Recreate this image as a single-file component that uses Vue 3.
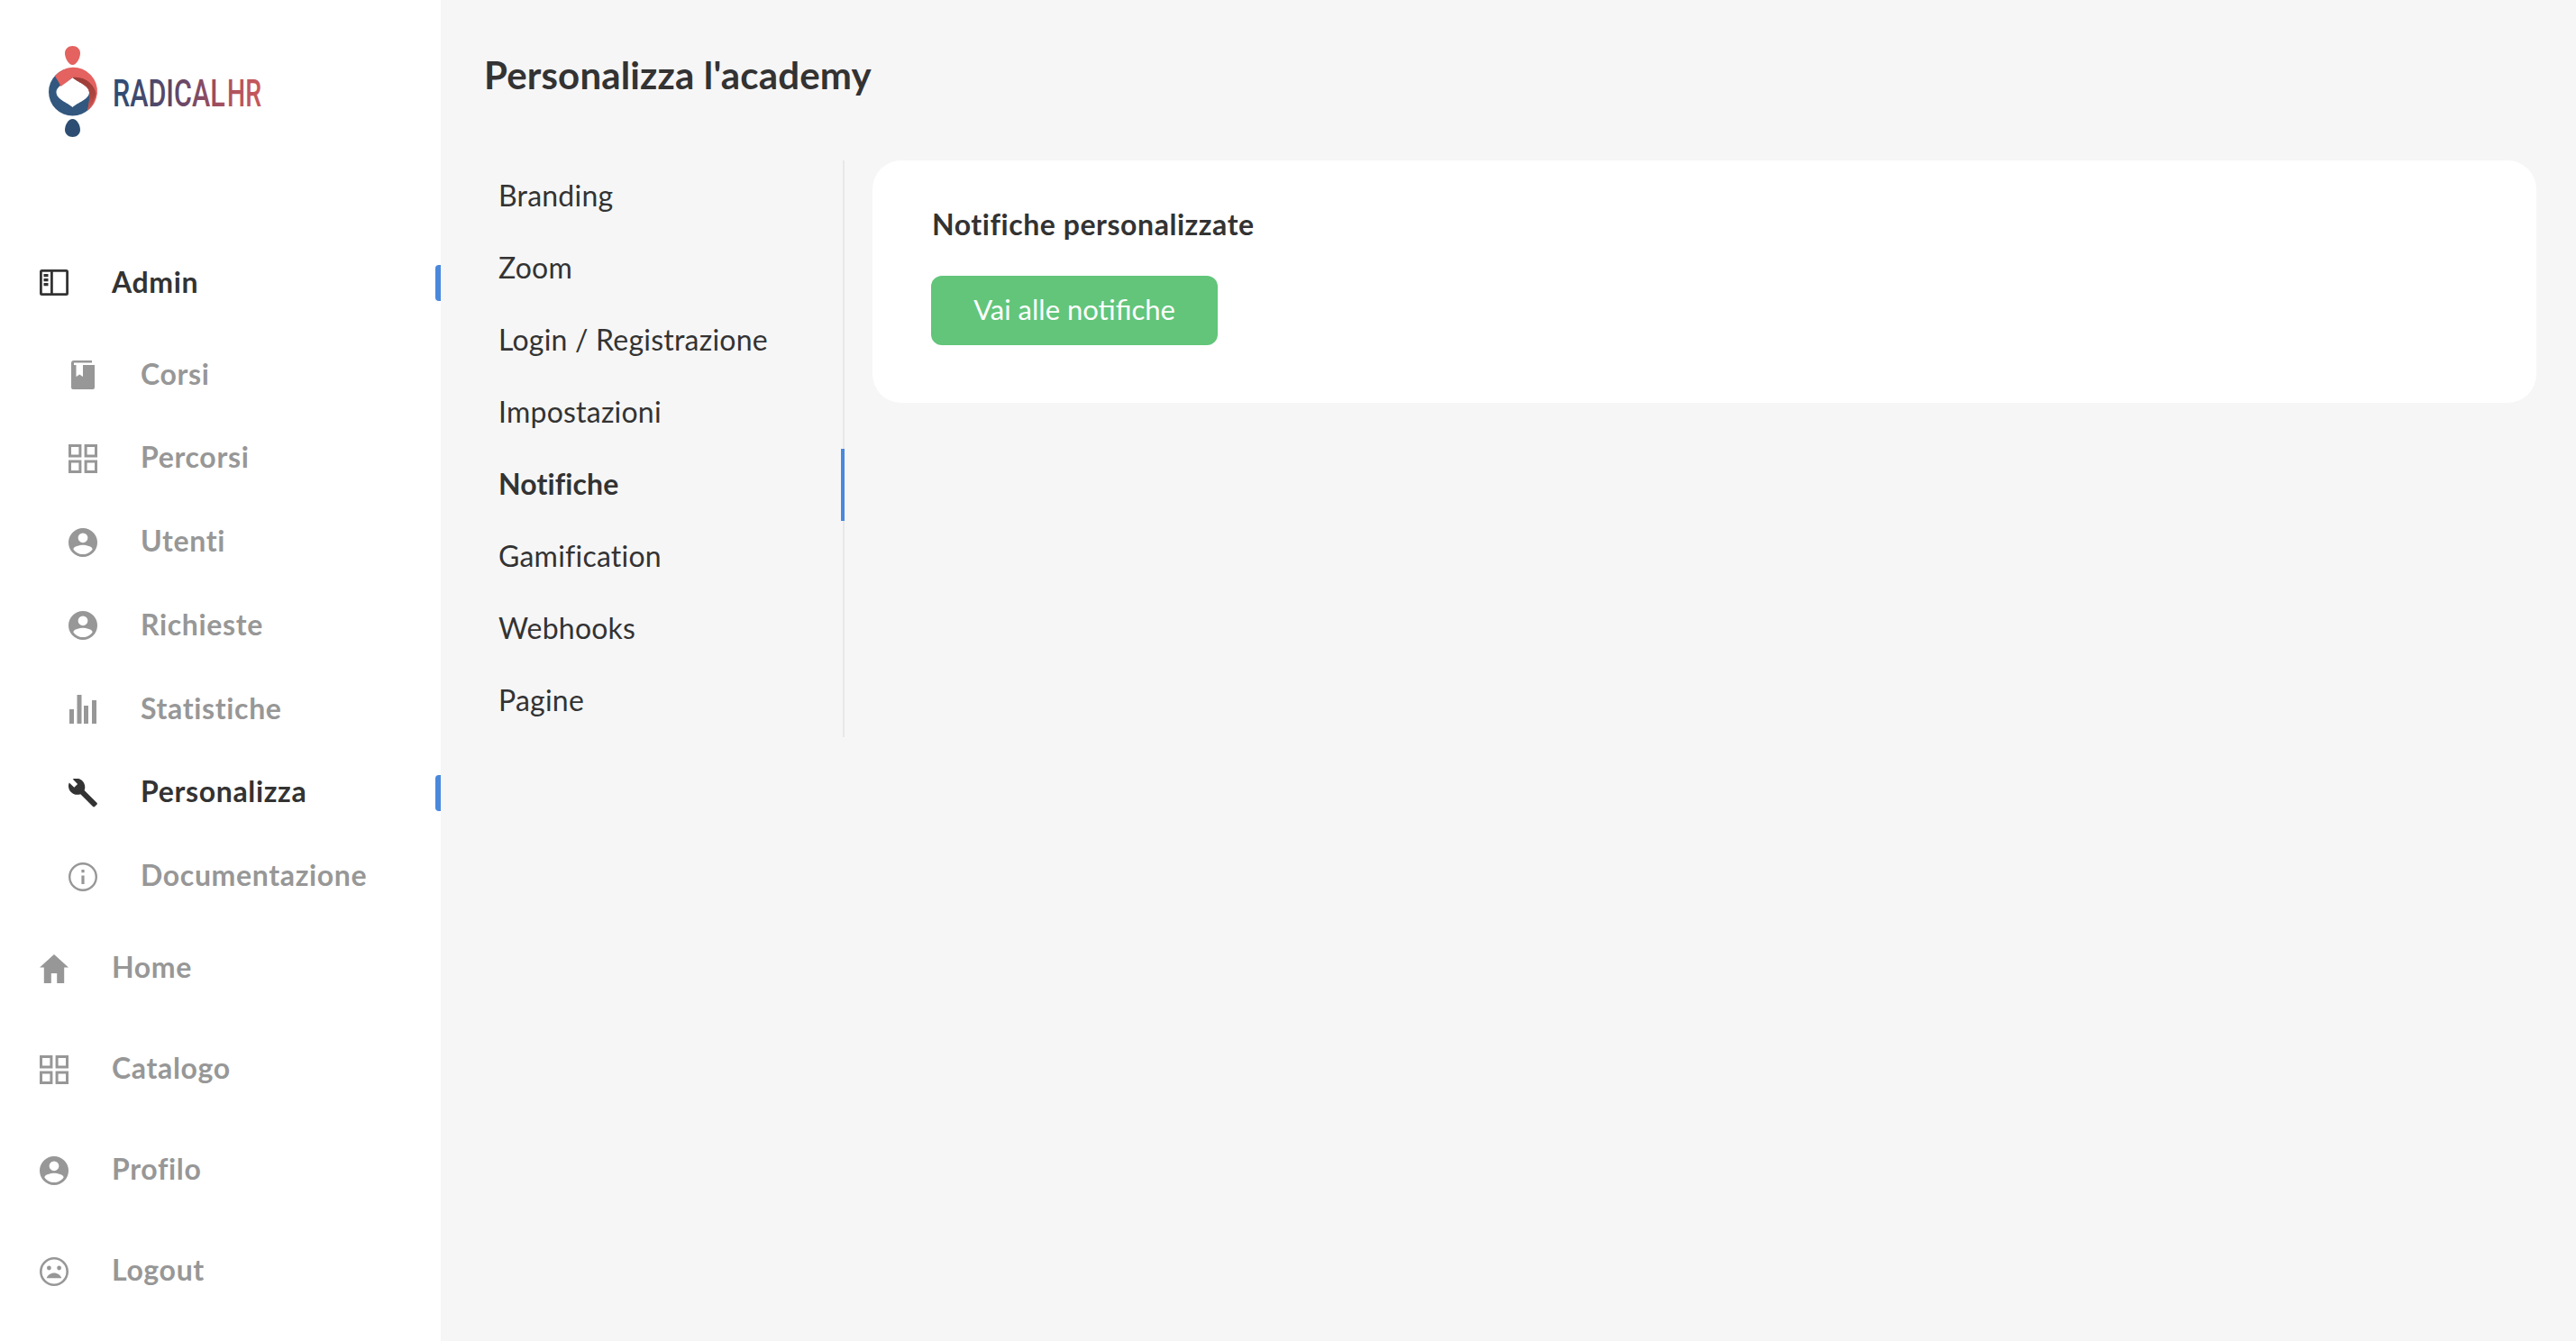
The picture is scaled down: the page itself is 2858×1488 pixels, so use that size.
<script setup>
const paths = {
  book: 'M3 3a3 3 0 0 1 3-3h20v2.400H6v2.600h2.500v13l3.750-2.600 3.750 2.600v-13H29V30a2 2 0 0 1-2 2H5a2 2 0 0 1-2-2z',
  grid: 'M0 0h14.400v14.400H0zM3 3v8.400h8.400V3zM17.600 0H32v14.400H17.600zM20.600 3v8.400H29V3zM0 17.600h14.400V32H0zM3 20.600V29h8.400v-8.400zM17.600 17.600H32V32H17.600zM20.600 20.600V29H29v-8.400z',
  user: 'M16 0a16 16 0 1 0 0 32a16 16 0 0 0 0-32zM16 5.400a5.400 5.400 0 1 1 0 10.800a5.400 5.400 0 0 1 0-10.800zM16 29c-4.400 0-8.300-2.200-10.600-5.600c.2-3 7-4.600 10.600-4.600s10.400 1.600 10.600 4.600C24.300 26.800 20.400 29 16 29z',
  chart: 'M1 16h5v16H1zM9.500 0h5v32h-5zM17 12h5v20h-5zM26 6h5v26h-5z',
  wrench: 'M31.400 26.700 17.600 12.900c1.400-3.500.6-7.600-2.200-10.400C12.400-.5 8-.9 4.700.5l5.400 5.400-3.800 3.800L.8 4.400C-.8 7.700-.1 12 2.900 15c2.800 2.800 6.900 3.600 10.400 2.200l13.800 13.800c.6.6 1.500.6 2 0l2.300-2.300c.7-.6.7-1.500 0-2z',
  info: 'M16 0a16 16 0 1 0 0 32a16 16 0 0 0 0-32zM16 29.600a13.600 13.600 0 1 1 0-27.200a13.600 13.600 0 0 1 0 27.200zM14.400 14.400h3.200V24h-3.200zM14.400 8h3.200v3.200h-3.200z',
  home: 'M16 0 32 14.400h-4.800V32h-8v-11h-6.400v11h-8V14.400H0z',
  sad: 'M16 0a16 16 0 1 0 0 32a16 16 0 0 0 0-32zM16 29.400a13.400 13.400 0 1 1 0-26.800a13.400 13.400 0 0 1 0 26.800zM10.400 9.600a2.400 2.400 0 1 1 0 4.800a2.400 2.400 0 0 1 0-4.800zM21.600 9.600a2.400 2.400 0 1 1 0 4.800a2.400 2.400 0 0 1 0-4.800zM16 17.600c3.800 0 7 2.300 8.300 5.600H7.700c1.300-3.300 4.500-5.600 8.300-5.600z',
}
const sub = [
  { label: 'Corsi', icon: 'book' },
  { label: 'Percorsi', icon: 'grid' },
  { label: 'Utenti', icon: 'user' },
  { label: 'Richieste', icon: 'user' },
  { label: 'Statistiche', icon: 'chart' },
  { label: 'Personalizza', icon: 'wrench', active: true },
  { label: 'Documentazione', icon: 'info' },
]
const main = [
  { label: 'Home', icon: 'home' },
  { label: 'Catalogo', icon: 'grid' },
  { label: 'Profilo', icon: 'user' },
  { label: 'Logout', icon: 'sad' },
]
const tabs = ['Branding', 'Zoom', 'Login / Registrazione', 'Impostazioni', 'Notifiche', 'Gamification', 'Webhooks', 'Pagine']
</script>

<template>
  <div class="page">
    <aside class="sidebar">
      <div class="logo">
        <svg width="300" height="164" viewBox="0 0 300 164">
          <defs>
            <linearGradient id="logoA" x1="0" y1="0" x2="1" y2="0">
              <stop offset="0" stop-color="#2b4d74" />
              <stop offset="0.55" stop-color="#5f4668" />
              <stop offset="1" stop-color="#a8505f" />
            </linearGradient>
            <linearGradient id="logoB" x1="0" y1="0" x2="1" y2="0">
              <stop offset="0" stop-color="#ab535e" />
              <stop offset="1" stop-color="#c8585a" />
            </linearGradient>
            <linearGradient id="logoDark" x1="0" y1="0" x2="0" y2="1">
              <stop offset="0" stop-color="#9a3c38" />
              <stop offset="0.6" stop-color="#b0463f" />
              <stop offset="1" stop-color="#d85a57" />
            </linearGradient>
          </defs>
          <path d="M80.500 51c4.700 0 8.500 3.300 8.500 8 0 5.500-4 13-8.500 13S72 64.500 72 59c0-4.700 3.800-8 8.500-8z" fill="#e4625f" />
          <path d="M80.500 152c4.700 0 8.500-3.300 8.500-8 0-5.500-4-12-8.500-12S72 138.500 72 144c0 4.700 3.800 8 8.500 8z" fill="#2d4e72" />
          <path fill-rule="evenodd" fill="#33587f" d="M80.500 75.500a26.500 26.500 0 1 1 0 53a26.500 26.500 0 0 1 0-53zM80.500 86C75 91 62.500 95 62.500 102.500C62.500 110 75 114 80.500 119C86 114 99 110 99 102.500C99 95 86 91 80.500 86z" />
          <path fill="#e4625f" d="M61 84.500A26.500 26.500 0 1 1 97 122.800C99 116 99.500 108 99 102.500C99 95 86 91 80.500 86C76 90 71 93 67.500 96C66 92 63 88 61 84.500z" />
          <path fill="url(#logoDark)" d="M80.500 86C86 91 99 95 99 102.500C99.500 108 99 116 97 122.800C101 119.500 105 112 106.500 104C105 94 94 84 80.500 86z" />
          <text class="logo-text" transform="translate(125 117.500) scale(.71 1)" fill="url(#logoA)">RADICAL</text>
          <text class="logo-text" transform="translate(252 117.500) scale(.66 1)" fill="url(#logoB)">HR</text>
        </svg>
      </div>

      <nav class="nav">
        <a class="nav-row active">
          <svg class="icon" viewBox="0 0 32 32">
            <path fill-rule="evenodd" d="M2.500 1h27A2.500 2.500 0 0 1 32 3.500v24a2.500 2.500 0 0 1-2.500 2.500h-27A2.500 2.500 0 0 1 0 27.500v-24A2.500 2.500 0 0 1 2.500 1zM2.800 3.800v23.400h9.200V3.800zM14.800 3.800v23.400h14.400V3.800zM4.500 6h5v3.200h-5zM4.500 11h5v3.200h-5zM4.500 16h5v3.200h-5z" />
          </svg>
          <span>Admin</span>
        </a>
        <div class="sub">
          <a v-for="item in sub" :key="item.label" class="nav-row" :class="{ active: item.active }">
            <svg class="icon" viewBox="0 0 32 32"><path fill-rule="evenodd" :d="paths[item.icon]" /></svg>
            <span>{{ item.label }}</span>
          </a>
        </div>
        <div class="main">
          <a v-for="item in main" :key="item.label" class="nav-row">
            <svg class="icon" viewBox="0 0 32 32"><path fill-rule="evenodd" :d="paths[item.icon]" /></svg>
            <span>{{ item.label }}</span>
          </a>
        </div>
      </nav>
    </aside>

    <main class="content">
      <h1>Personalizza l'academy</h1>
      <div class="columns">
        <ul class="tabs">
          <li v-for="tab in tabs" :key="tab" :class="{ current: tab === 'Notifiche' }">{{ tab }}</li>
        </ul>
        <section class="card">
          <h2>Notifiche personalizzate</h2>
          <button type="button">Vai alle notifiche</button>
        </section>
      </div>
    </main>
  </div>
</template>

<style>
html, body { margin: 0; background: #f6f6f6; }
</style>

<style scoped>
.page {
  display: flex;
  height: 1488px;
  overflow: hidden;
  background: #f6f6f6;
  color: #333;
  font-family: Lato, "Noto Sans", sans-serif;
  font-size: 32px;
}
.sidebar {
  width: 489px;
  flex: none;
  background: #fff;
}
.logo { height: 164px; margin-bottom: 130px; }
.logo svg { display: block; }
.logo-text {
  font-family: Roboto, sans-serif;
  font-size: 43px;
  font-weight: 500;
}
.nav-row {
  position: relative;
  display: flex;
  align-items: center;
  gap: 48px;
  height: 40px;
  color: #979797;
  font-weight: 700;
  letter-spacing: .65px;
}
.nav-row span { margin-top: -4px; }
.nav-row.active { color: #333; }
.nav-row.active::after {
  content: "";
  position: absolute;
  right: 0;
  top: 0;
  width: 6px;
  height: 40px;
  border-radius: 4px 0 0 4px;
  background: #4a88dc;
}
.icon {
  width: 32px;
  height: 32px;
  flex: none;
  fill: currentColor;
}
.nav { padding-left: 44px; }
.sub {
  display: flex;
  flex-direction: column;
  gap: 52.8px;
  margin-top: 62px;
  padding-left: 32px;
}
.main {
  display: flex;
  flex-direction: column;
  gap: 72px;
  margin-top: 62.2px;
}
.content {
  flex: 1;
  min-width: 0;
  padding: 0 44px 0 48px;
}
h1 {
  margin: 0;
  height: 178px;
  padding-top: 58px;
  box-sizing: border-box;
  font-size: 42px;
  line-height: 50px;
  font-weight: 700;
  letter-spacing: .15px;
}
.columns {
  display: flex;
  align-items: flex-start;
  gap: 31px;
}
.tabs {
  list-style: none;
  margin: 0;
  padding: 0;
  width: 398px;
  flex: none;
  border-right: 2px solid #e8e8e8;
  letter-spacing: .22px;
}
.tabs li {
  position: relative;
  height: 80px;
  line-height: 78px;
  padding-left: 16px;
}
.tabs li.current { font-weight: 700; letter-spacing: .1px; }
.tabs li.current::after {
  content: "";
  position: absolute;
  right: -2px;
  top: 0;
  width: 4px;
  height: 80px;
  background: #4a88dc;
}
.card {
  flex: 1;
  box-sizing: border-box;
  height: 269px;
  padding: 53px 64px 64px 66px;
  border-radius: 32px;
  background: #fff;
}
h2 {
  margin: 0 0 39px;
  font-size: 32px;
  line-height: 36px;
  font-weight: 700;
  letter-spacing: .55px;
}
button {
  display: block;
  width: 318px;
  height: 77px;
  margin-left: -1px;
  padding: 0 0 3px;
  border: 0;
  border-radius: 12px;
  background: #62c57a;
  color: #fff;
  font: inherit;
  font-size: 31px;
}
</style>
